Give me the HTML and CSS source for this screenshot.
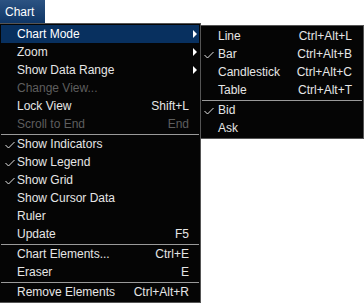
FILE: index.html
```html
<!DOCTYPE html>
<html>

	<head>
		<meta charset="utf-8" />
		<title>Chart</title>
		<link rel="stylesheet" href="styles.css">
	</head>

	<body>
		<div class="menubar">
			<div class="menubar_item">Chart</div>
		</div>

		<ul class="menu menu_main">
			<li class="item active"><span class="check"></span><span class="label">Chart Mode</span><span class="key"></span><span class="arrow"></span></li>
			<li class="item"><span class="check"></span><span class="label">Zoom</span><span class="key"></span><span class="arrow"></span></li>
			<li class="item"><span class="check"></span><span class="label">Show Data Range</span><span class="key"></span><span class="arrow"></span></li>
			<li class="item disabled"><span class="check"></span><span class="label">Change View...</span><span class="key"></span><span></span></li>
			<li class="item"><span class="check"></span><span class="label">Lock View</span><span class="key">Shift+L</span><span></span></li>
			<li class="item disabled"><span class="check"></span><span class="label">Scroll to End</span><span class="key">End</span><span></span></li>
			<li class="sep"></li>
			<li class="item"><span class="check"><svg width="10" height="8" viewBox="0 0 10 8"><polyline points="0.5,4 3.5,7 9.5,1" /></svg></span><span class="label">Show Indicators</span><span class="key"></span><span></span></li>
			<li class="item"><span class="check"><svg width="10" height="8" viewBox="0 0 10 8"><polyline points="0.5,4 3.5,7 9.5,1" /></svg></span><span class="label">Show Legend</span><span class="key"></span><span></span></li>
			<li class="item"><span class="check"><svg width="10" height="8" viewBox="0 0 10 8"><polyline points="0.5,4 3.5,7 9.5,1" /></svg></span><span class="label">Show Grid</span><span class="key"></span><span></span></li>
			<li class="item"><span class="check"></span><span class="label">Show Cursor Data</span><span class="key"></span><span></span></li>
			<li class="item"><span class="check"></span><span class="label">Ruler</span><span class="key"></span><span></span></li>
			<li class="item"><span class="check"></span><span class="label">Update</span><span class="key">F5</span><span></span></li>
			<li class="sep"></li>
			<li class="item"><span class="check"></span><span class="label">Chart Elements...</span><span class="key">Ctrl+E</span><span></span></li>
			<li class="item"><span class="check"></span><span class="label">Eraser</span><span class="key">E</span><span></span></li>
			<li class="sep"></li>
			<li class="item"><span class="check"></span><span class="label">Remove Elements</span><span class="key">Ctrl+Alt+R</span><span></span></li>
		</ul>

		<ul class="menu menu_sub">
			<li class="item"><span class="check"></span><span class="label">Line</span><span class="key">Ctrl+Alt+L</span><span></span></li>
			<li class="item"><span class="check"><svg width="10" height="8" viewBox="0 0 10 8"><polyline points="0.5,4 3.5,7 9.5,1" /></svg></span><span class="label">Bar</span><span class="key">Ctrl+Alt+B</span><span></span></li>
			<li class="item"><span class="check"></span><span class="label">Candlestick</span><span class="key">Ctrl+Alt+C</span><span></span></li>
			<li class="item"><span class="check"></span><span class="label">Table</span><span class="key">Ctrl+Alt+T</span><span></span></li>
			<li class="sep"></li>
			<li class="item"><span class="check"><svg width="10" height="8" viewBox="0 0 10 8"><polyline points="0.5,4 3.5,7 9.5,1" /></svg></span><span class="label">Bid</span><span class="key"></span><span></span></li>
			<li class="item"><span class="check"></span><span class="label">Ask</span><span class="key"></span><span></span></li>
		</ul>
	</body>

</html>
```

FILE: styles.css
```css
* {
	margin: 0;
	padding: 0;
	box-sizing: border-box;
}

body {
	background: #fff;
	font-family: "Liberation Sans", Arial, sans-serif;
	font-size: 12px;
	color: #e6e6e6;
}

li {
	list-style: none;
}

.menubar {
	height: 23px;
	display: flex;
}

.menubar_item {
	width: 45px;
	height: 23px;
	line-height: 24px;
	padding-left: 5px;
	color: #fff;
	background: linear-gradient(#2c5382, #0f3666);
}

/* dropdowns lie over the page */
.menu {
	position: absolute;
	background: #050505;
	border: 1px solid #555;
	padding: 1px;
}

.menu_main {
	top: 23px;
	left: -1px;
	width: 202px;
}

.menu_sub {
	top: 25px;
	left: 200px;
	width: 164px;
}

.item {
	display: grid;
	grid-template-columns: 16px 1fr auto 10px;
	height: 18px;
	line-height: 18px;
	white-space: nowrap;
}

.item.active {
	background: #08305f;
	color: #fff;
}

.item.disabled {
	color: #5e5e5e;
}

.check {
	display: flex;
	align-items: center;
	padding-left: 4px;
	padding-top: 1px;
}

.menu_sub .check {
	padding-left: 2px;
}

.check polyline {
	fill: none;
	stroke: #e6e6e6;
	stroke-width: 1;
}

.arrow {
	display: flex;
	align-items: center;
	padding-left: 4px;
}

.arrow::after {
	content: "";
	border-left: 4px solid #fff;
	border-top: 4px solid transparent;
	border-bottom: 4px solid transparent;
}

.sep {
	height: 2px;
	border-bottom: 1px solid #9a9a9a;
}
```
